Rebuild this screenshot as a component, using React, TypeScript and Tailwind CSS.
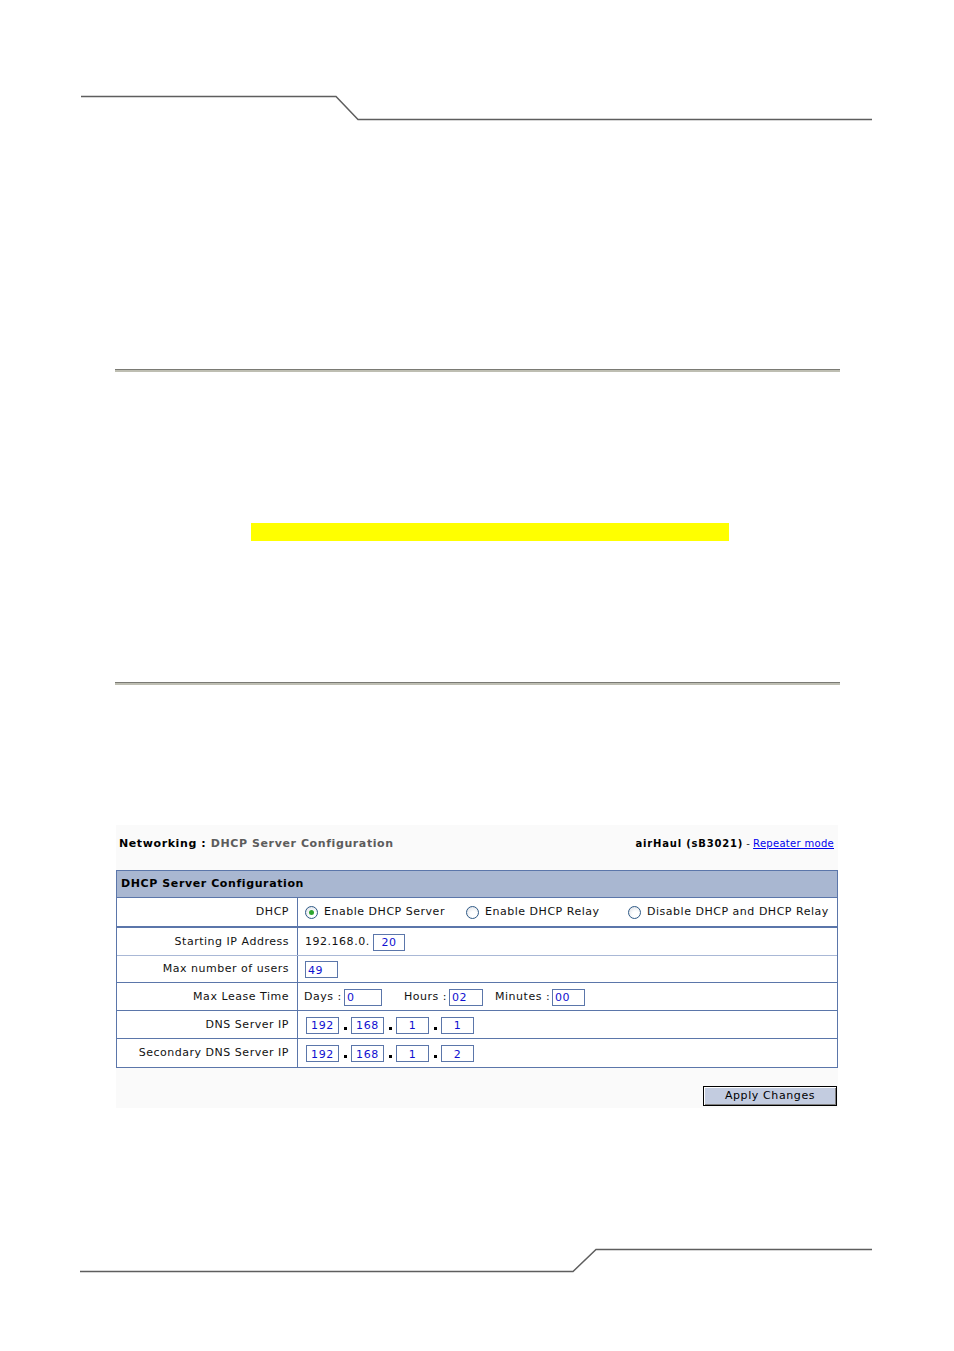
import React from "react";

const font = "font-['DejaVu_Sans','Verdana',sans-serif]";

function Radio({ checked }: { checked?: boolean }) {
  return (
    <span className="flex h-[13px] w-[13px] shrink-0 items-center justify-center rounded-full border border-[#2f5a86] bg-[radial-gradient(circle_at_60%_65%,#ffffff_30%,#d7dbe2_100%)]">
      {checked && <span className="h-[5px] w-[5px] rounded-full bg-[#2fa52f]" />}
    </span>
  );
}

function Box({ value, w, center }: { value: string; w: string; center?: boolean }) {
  return (
    <span
      className={`flex h-[17px] items-center border border-[#5b76aa] bg-white pt-[1px] text-[11px] leading-none tracking-[0.6px] text-[#1010d0] ${w} ${
        center ? "justify-center" : "pl-[2px]"
      }`}
    >
      {value}
    </span>
  );
}

function Row({
  label,
  children,
  h,
  border,
}: {
  label: string;
  children: React.ReactNode;
  h: string;
  border: string;
}) {
  return (
    <div className={`flex ${h} ${border}`}>
      <div className="flex w-[181px] shrink-0 items-center justify-end border-r border-[#5b76aa] pr-[8px] pt-[1px]">
        {label}
      </div>
      <div className="flex flex-1 items-center pl-[7px] pt-[1px]">{children}</div>
    </div>
  );
}

function Dot() {
  return (
    <span className="flex w-[12px] justify-center">
      <span className="mt-[6px] h-[3px] w-[3px] bg-black" />
    </span>
  );
}

function Ip({ d }: { d: string }) {
  return (
    <div className="flex items-center">
      <Box value="192" w="w-[33px]" center />
      <Dot />
      <Box value="168" w="w-[33px]" center />
      <Dot />
      <Box value="1" w="w-[33px]" center />
      <Dot />
      <Box value={d} w="w-[33px]" center />
    </div>
  );
}

export default function App() {
  return (
    <div className={`relative h-[1351px] w-[954px] overflow-hidden bg-white ${font} text-[11px] tracking-[0.52px] text-[#111]`}>
      <svg width="954" height="130" className="block">
        <polyline
          points="81,96.5 336,96.5 358,119.5 872,119.5"
          fill="none"
          stroke="#5e5e5e"
          strokeWidth="1.5"
        />
      </svg>

      <div className="ml-[115px] mt-[239px] h-[3px] w-[725px] border-t border-[#7a7a74] bg-[#bebeb2]" />

      <div className="ml-[251px] mt-[151px] h-[18px] w-[478px] bg-[#ffff00]" />

      <div className="ml-[115px] mt-[141px] h-[3px] w-[725px] border-t border-[#7a7a74] bg-[#bebeb2]" />

      <div className="ml-[116px] mt-[140px] w-[722px] bg-[#fafafa] pb-[2px]">
        <div className="flex h-[36px] items-center justify-between pl-[3px] pr-[4px]">
          <div className="pt-[2px] font-bold tracking-[0.6px]">
            <span className="text-black">Networking : </span>
            <span className="text-[#5c5c5c]">DHCP Server Configuration</span>
          </div>
          <div className="text-[10px] tracking-normal">
            <span className="font-bold tracking-[0.8px] text-black">airHaul (sB3021)</span>
            <span className="text-[#333]"> - </span>
            <span className="tracking-[0.3px] text-[#0000ee] underline">Repeater mode</span>
          </div>
        </div>

        <div className="mt-[9px] border border-[#5b76aa] bg-white">
          <div className="flex h-[27px] items-center border-b border-[#5b76aa] bg-[#a9b7d1] pl-[4px] font-bold tracking-[0.6px] text-black">
            DHCP Server Configuration
          </div>
          <Row label="DHCP" h="h-[30px]" border="border-b-2 border-[#5b76aa]">
            <div className="flex w-[161px] items-center">
              <Radio checked />
              <span className="ml-[6px]">Enable DHCP Server</span>
            </div>
            <div className="flex w-[162px] items-center">
              <Radio />
              <span className="ml-[6px]">Enable DHCP Relay</span>
            </div>
            <div className="flex items-center">
              <Radio />
              <span className="ml-[6px]">Disable DHCP and DHCP Relay</span>
            </div>
          </Row>
          <Row label="Starting IP Address" h="h-[28px]" border="border-b border-[#a9b8d6]">
            <span className="w-[68px] whitespace-nowrap">192.168.0.</span>
            <Box value="20" w="w-[32px]" center />
          </Row>
          <Row label="Max number of users" h="h-[27px]" border="border-b border-[#5b76aa]">
            <Box value="49" w="w-[33px]" />
          </Row>
          <Row label="Max Lease Time" h="h-[28px]" border="border-b border-[#5b76aa]">
            <span className="-ml-[1px] w-[40px] whitespace-nowrap">Days :</span>
            <Box value="0" w="w-[38px]" />
            <span className="ml-[22px] w-[45px] whitespace-nowrap">Hours :</span>
            <Box value="02" w="w-[34px]" />
            <span className="ml-[12px] w-[57px] whitespace-nowrap">Minutes :</span>
            <Box value="00" w="w-[33px]" />
          </Row>
          <Row label="DNS Server IP" h="h-[28px]" border="border-b border-[#5b76aa]">
            <span className="ml-[1px]">
              <Ip d="1" />
            </span>
          </Row>
          <Row label="Secondary DNS Server IP" h="h-[28px]" border="">
            <span className="ml-[1px]">
              <Ip d="2" />
            </span>
          </Row>
        </div>

        <div className="mt-[18px] flex justify-end pr-[1px]">
          <button className="flex h-[20px] w-[134px] items-center justify-center border border-black bg-[#c3cce0] text-[11px] tracking-[0.6px] text-black shadow-[inset_1px_1px_0_#ffffff,inset_-1px_-1px_0_#808080]">
            Apply Changes
          </button>
        </div>
      </div>

      <svg width="954" height="244" className="block">
        <polyline
          points="80,163.5 573,163.5 596,141.5 872,141.5"
          fill="none"
          stroke="#5e5e5e"
          strokeWidth="1.5"
        />
      </svg>
    </div>
  );
}
